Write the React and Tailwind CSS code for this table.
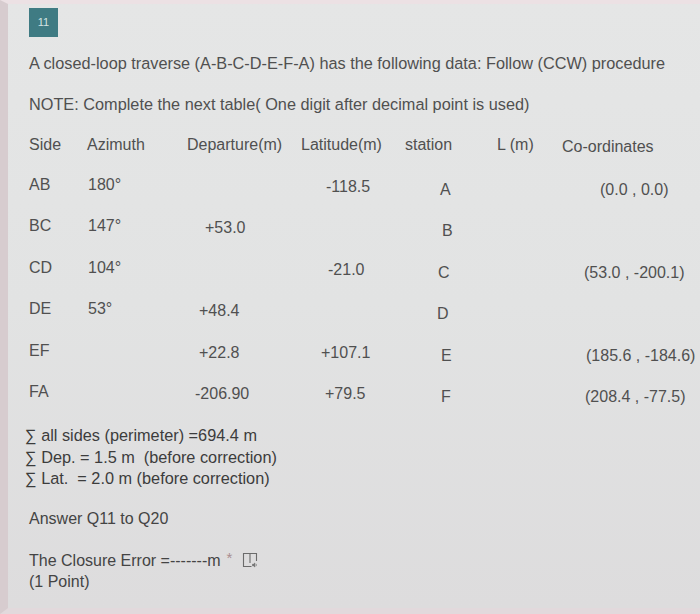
import React from 'react'

const rows = [
  { side: 'AB', az: '180°', dep: '', depPad: 'pl-[18px]', lat: '-118.5', latPad: 'pl-[25px]', st: 'A', stPad: 'pl-[35px]', co: '(0.0 , 0.0)', coPad: 'pl-[38px]' },
  { side: 'BC', az: '147°', dep: '+53.0', depPad: 'pl-[18px]', lat: '', latPad: 'pl-[25px]', st: 'B', stPad: 'pl-[37px]', co: '', coPad: 'pl-[22px]' },
  { side: 'CD', az: '104°', dep: '', depPad: 'pl-[18px]', lat: '-21.0', latPad: 'pl-[27px]', st: 'C', stPad: 'pl-[33px]', co: '(53.0 , -200.1)', coPad: 'pl-[22px]' },
  { side: 'DE', az: '53°', dep: '+48.4', depPad: 'pl-[12px]', lat: '', latPad: 'pl-[25px]', st: 'D', stPad: 'pl-[32px]', co: '', coPad: 'pl-[22px]' },
  { side: 'EF', az: '', dep: '+22.8', depPad: 'pl-[12px]', lat: '+107.1', latPad: 'pl-[20px]', st: 'E', stPad: 'pl-[36px]', co: '(185.6 , -184.6)', coPad: 'pl-[24px]' },
  { side: 'FA', az: '', dep: '-206.90', depPad: 'pl-[8px]', lat: '+79.5', latPad: 'pl-[24px]', st: 'F', stPad: 'pl-[36px]', co: '(208.4 , -77.5)', coPad: 'pl-[23px]' },
]

function ReaderIcon() {
  return (
    <svg width="16" height="16" viewBox="0 0 16 16" fill="none" stroke="#6b6b6b" strokeWidth="1.1">
      <path d="M9.5 14.5H1.5V1.5H14.5V9" />
      <path d="M8 1.5V11" />
      <path d="M10.5 12.2h1l1.3-1.2v4l-1.3-1.2h-1z" fill="#6b6b6b" strokeWidth="0.6" />
      <path d="M14 11.8q0.8 1.2 0 2.4" strokeWidth="0.7" />
    </svg>
  )
}

export default function App() {
  return (
    <div
      className="flex h-[614px] w-[700px] flex-col overflow-hidden border-t-4 border-b-[6px] border-l-8 border-t-[#ece1e4] border-b-[#e2d9dc] border-l-[#d7cccf] bg-gradient-to-b from-[#e5e6e6] via-[#e2e3e3] to-[#dddcdd] pt-[4px] pl-[21px] text-[16px] text-[#505050]"
      style={{ fontFamily: '"Liberation Sans", Arial, sans-serif' }}
    >
      <div className="flex h-[29px] w-[29px] items-center justify-center bg-[#3f7b83] text-[11px] text-[#d3e3e3]">11</div>

      <p className="mt-[16px] text-[16.3px] leading-[20px]">A closed-loop traverse (A-B-C-D-E-F-A) has the following data: Follow (CCW) procedure</p>
      <p className="mt-[21px] text-[16.3px] leading-[20px]">NOTE: Complete the next table( One digit after decimal point is used)</p>

      <div className="mt-[10px]">
        <div className="grid h-[42px] grid-cols-[58px_100px_114px_104px_92px_65px_1fr] items-center">
          <span>Side</span>
          <span>Azimuth</span>
          <span>Departure(m)</span>
          <span>Latitude(m)</span>
          <span>station</span>
          <span>L (m)</span>
          <span className="pt-[4px]">Co-ordinates</span>
        </div>
        {rows.map((r) => (
          <div key={r.side} className="grid h-[41.5px] grid-cols-[58px_100px_114px_104px_92px_65px_1fr] items-center">
            <span className="-mt-[4px]">{r.side}</span>
            <span className="-mt-[4px] pl-[1px]">{r.az}</span>
            <span className={r.depPad}>{r.dep}</span>
            <span className={r.latPad}>{r.lat}</span>
            <span className={`${r.stPad} pt-[6px]`}>{r.st}</span>
            <span />
            <span className={`${r.coPad} pt-[6px]`}>{r.co}</span>
          </div>
        ))}
      </div>

      <div className="mt-[10px] text-[16.3px] text-[#3c3c3c] leading-[21.5px]">
        <p className="-ml-[4px]">∑ all sides (perimeter) =694.4 m</p>
        <p className="-ml-[4px]">∑ Dep. = 1.5 m&nbsp; (before correction)</p>
        <p className="-ml-[4px]">∑ Lat. &nbsp;= 2.0 m (before correction)</p>
      </div>

      <p className="mt-[18px] text-[16px] leading-[21px] text-[#444]">Answer Q11 to Q20</p>

      <div className="mt-[21px] text-[#444] leading-[21px]">
        <div className="flex items-center">
          <span>The Closure Error =-------m</span>
          <span className="ml-[6px] -mt-[6px] text-[15px] text-[#a98d90]">*</span>
          <span className="ml-[10px]"><ReaderIcon /></span>
        </div>
        <p>(1 Point)</p>
      </div>
    </div>
  )
}
